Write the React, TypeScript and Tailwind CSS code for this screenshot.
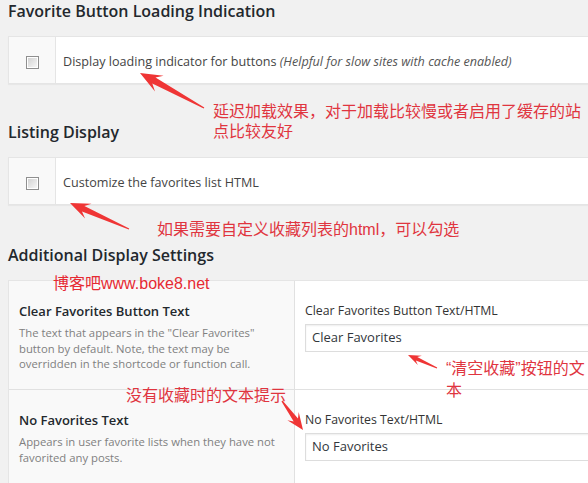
import React from 'react';

const wpFont = { fontFamily: '"Open Sans", "Noto Sans", sans-serif' };
const noteFont = { fontFamily: '"Liberation Sans", "Noto Sans CJK SC", sans-serif' };

function Checkbox() {
  return (
    <div className="w-[13px] h-[13px] border border-[#8f8f8f] bg-white p-px">
      <div className="w-full h-full bg-gradient-to-br from-[#d3d3d3] to-[#f7f7f7]" />
    </div>
  );
}

function CheckRow({ children }: { children: React.ReactNode }) {
  return (
    <div className="flex h-[48px] bg-white border border-[#e5e5e5] shadow-[0_1px_1px_rgba(0,0,0,0.04)]">
      <div className="w-[47px] shrink-0 bg-[#f9f9f9] border-r border-[#e5e5e5] flex justify-center pt-[19px]">
        <Checkbox />
      </div>
      <div className="pl-[7px] pt-[15px] text-[12.6px] leading-[20px] text-[#444] whitespace-nowrap">{children}</div>
    </div>
  );
}

function Heading({ children }: { children: React.ReactNode }) {
  return <h2 className="text-[16px] leading-[20px] font-semibold text-[#23282d]">{children}</h2>;
}

function arrow(x1: number, y1: number, x2: number, y2: number, head: number, barb: number) {
  const dx = x2 - x1;
  const dy = y2 - y1;
  const len = Math.hypot(dx, dy);
  const ux = dx / len;
  const uy = dy / len;
  const nx = -uy;
  const ny = ux;
  const bx = x2 - ux * head;
  const by = y2 - uy * head;
  const ix = x2 - ux * head * 0.72;
  const iy = y2 - uy * head * 0.72;
  const s = barb * 0.38;
  const pts = [
    [x2, y2],
    [bx + nx * barb, by + ny * barb],
    [ix + nx * s, iy + ny * s],
    [x1 + nx * 0.6, y1 + ny * 0.6],
    [x1 - nx * 0.6, y1 - ny * 0.6],
    [ix - nx * s, iy - ny * s],
    [bx - nx * barb, by - ny * barb],
  ];
  return pts.map((p) => p.map((v) => v.toFixed(1)).join(',')).join(' ');
}

function FieldRow({
  title,
  desc,
  label,
  value,
  last,
}: {
  title: string;
  desc: React.ReactNode;
  label: string;
  value: string;
  last?: boolean;
}) {
  return (
    <div className={last ? 'flex h-[120px]' : 'flex h-[109px] border-b border-[#e1e1e1]'}>
      <div className="w-[286px] shrink-0 bg-[#f9f9f9] border-r border-[#e1e1e1] px-[10px] pt-[20px]">
        <div className="text-[13px] leading-[20px] font-semibold text-[#23282d]">{title}</div>
        <p className="mt-[4px] text-[11.3px] leading-[15.5px] text-[#808080] whitespace-nowrap">{desc}</p>
      </div>
      <div className="flex-1 bg-white pl-[10px] pt-[22px]">
        <div className="text-[12.3px] leading-[16px] text-[#333]">{label}</div>
        <div className="mt-[5px] h-[28px] border border-[#ddd] shadow-[inset_0_1px_2px_rgba(0,0,0,0.07)] pl-[6px] flex items-center text-[13px] text-[#32373c]">
          {value}
        </div>
      </div>
    </div>
  );
}

export default function App() {
  return (
    <div className="relative w-[588px] h-[483px] overflow-hidden bg-[#f1f1f1]" style={wpFont}>
      <div className="w-[640px] pl-[8px] pt-px">
        <Heading>Favorite Button Loading Indication</Heading>
        <div className="mt-[15px]">
          <CheckRow>
            Display loading indicator for buttons{' '}
            <em className="text-[#555]">(Helpful for slow sites with cache enabled)</em>
          </CheckRow>
        </div>

        <div className="mt-[38px]">
          <Heading>Listing Display</Heading>
        </div>
        <div className="mt-[15px]">
          <CheckRow>Customize the favorites list HTML</CheckRow>
        </div>

        <div className="mt-[40px]">
          <Heading>Additional Display Settings</Heading>
        </div>
        <div className="mt-[15px] border border-[#e5e5e5] bg-white">
          <FieldRow
            title="Clear Favorites Button Text"
            desc={
              <>
                The text that appears in the "Clear Favorites"
                <br />
                button by default. Note, the text may be
                <br />
                overridden in the shortcode or function call.
              </>
            }
            label="Clear Favorites Button Text/HTML"
            value="Clear Favorites"
          />
          <FieldRow
            title="No Favorites Text"
            desc={
              <>
                Appears in user favorite lists when they have not
                <br />
                favorited any posts.
              </>
            }
            label="No Favorites Text/HTML"
            value="No Favorites"
            last
          />
        </div>
      </div>

      {/* annotations */}
      <svg className="absolute inset-0 pointer-events-none" width="588" height="483">
        <polygon points={arrow(204, 108, 140, 73, 22, 9)} fill="#ef3535" />
        <polygon points={arrow(129, 229, 70, 203, 20, 8)} fill="#ef3535" />
        <polygon points={arrow(437, 368, 408, 355, 13, 5)} fill="#ef3535" />
        <polygon points={arrow(282, 401, 303, 430, 17, 7)} fill="#ef3535" />
      </svg>
      <div className="absolute left-[213px] top-[102px] text-[16px] leading-[20px] text-[#e0353f] whitespace-nowrap" style={noteFont}>
        延迟加载效果，对于加载比较慢或者启用了缓存的站
        <br />
        点比较友好
      </div>
      <div className="absolute left-[157px] top-[220px] text-[16px] leading-[20px] text-[#e0353f] whitespace-nowrap" style={noteFont}>
        如果需要自定义收藏列表的html，可以勾选
      </div>
      <div className="absolute left-[53px] top-[274px] text-[16px] leading-[20px] text-[#e62a33] whitespace-nowrap" style={noteFont}>
        博客吧www.boke8.net
      </div>
      <div className="absolute left-[446px] top-[358px] text-[16px] leading-[22px] text-[#e0353f] whitespace-nowrap" style={noteFont}>
        “清空收藏”按钮的文
        <br />
        本
      </div>
      <div className="absolute left-[126px] top-[386px] text-[16px] leading-[20px] text-[#e0353f] whitespace-nowrap" style={noteFont}>
        没有收藏时的文本提示
      </div>
    </div>
  );
}
